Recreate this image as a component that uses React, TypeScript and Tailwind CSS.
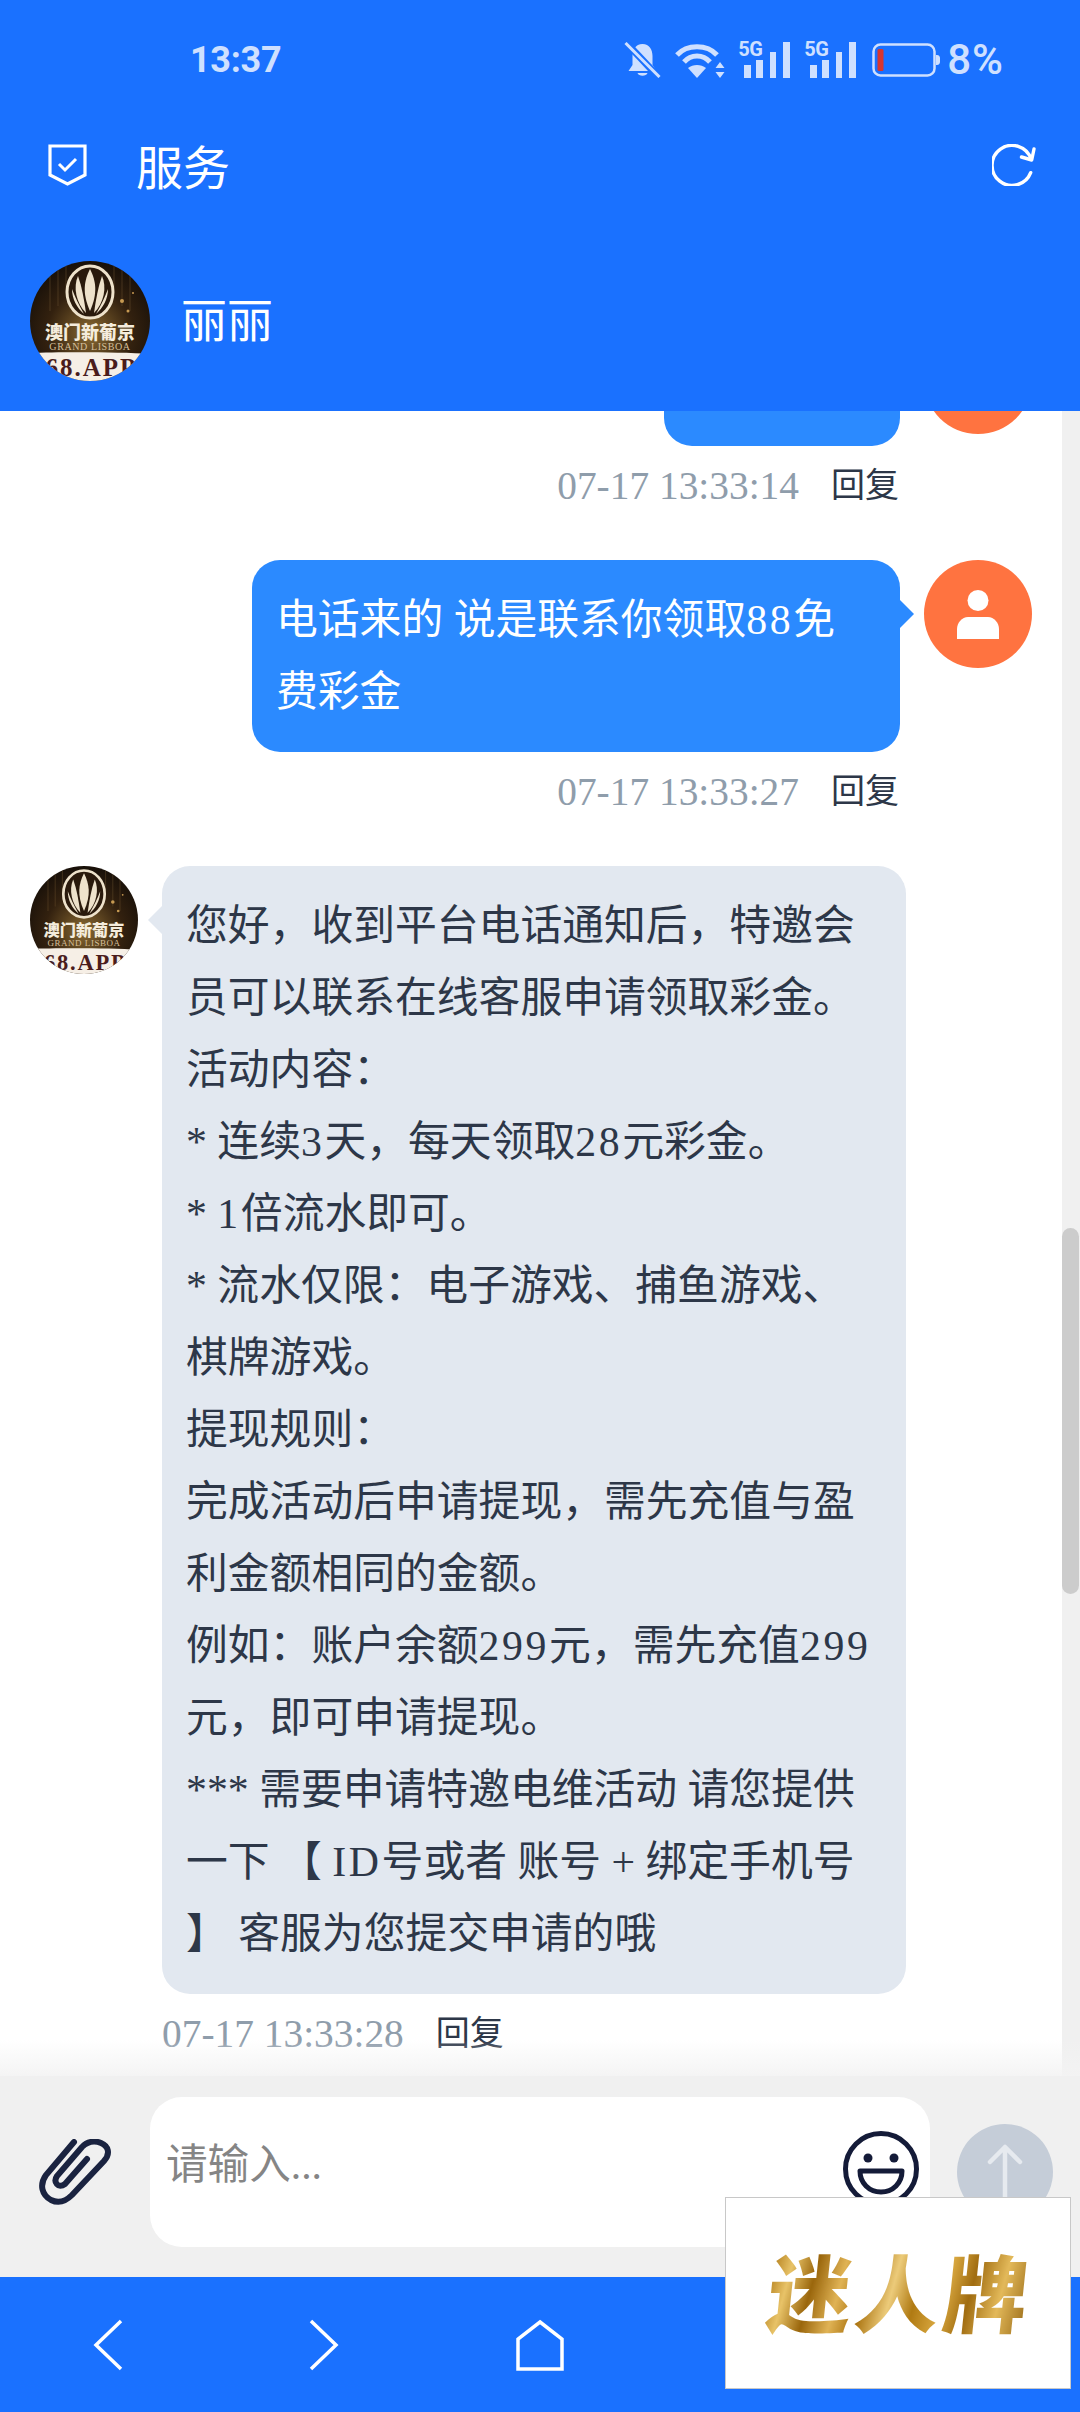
import React from "react";

const cjk = "font-['Liberation_Serif','Noto_Sans_CJK_SC',serif]";

function Lisboa({ size }: { size: number }) {
  const id = `clip${size}`;
  return (
    <svg width={size} height={size} viewBox="0 0 120 120" className="shrink-0">
      <defs>
        <clipPath id={id}>
          <circle cx="60" cy="60" r="60" />
        </clipPath>
        <radialGradient id={`g${size}`} cx="0.5" cy="0.6" r="0.65">
          <stop offset="0" stopColor="#8a6a32" />
          <stop offset="0.55" stopColor="#33210f" />
          <stop offset="1" stopColor="#120c07" />
        </radialGradient>
      </defs>
      <g clipPath={`url(#${id})`}>
        <rect width="120" height="120" fill={`url(#g${size})`} />
        <g stroke="#6b5330" strokeWidth="1" opacity="0.5">
          <path d="M20 0V50M28 0V45M36 0V30M84 0V30M92 0V45M100 0V50" />
        </g>
        <circle cx="92" cy="40" r="2" fill="#c79a52" />
        <circle cx="98" cy="50" r="1.5" fill="#c79a52" />
        <circle cx="103" cy="32" r="1" fill="#c79a52" />
        <ellipse cx="60" cy="31" rx="23" ry="26" fill="#2a1a0c" stroke="#eee2cb" strokeWidth="3" />
        <path d="M60 8C66 20 68 32 60 50C52 32 54 20 60 8Z" fill="#eee2cb" />
        <path d="M48 15C43 26 46 42 56 52C54 38 52 26 48 15Z" fill="#eee2cb" />
        <path d="M72 15C77 26 74 42 64 52C66 38 68 26 72 15Z" fill="#eee2cb" />
        <path d="M42 28C42 38 47 47 54 53C49 44 45 36 42 28Z" fill="#eee2cb" />
        <path d="M78 28C78 38 73 47 66 53C71 44 75 36 78 28Z" fill="#eee2cb" />
        <text x="60" y="77.5" textAnchor="middle" fontSize="18" fontWeight="800" fill="#f4ecdc" fontFamily="'Noto Sans CJK SC',sans-serif">澳门新葡京</text>
        <text x="60" y="89" textAnchor="middle" fontSize="10" letterSpacing="0.6" fill="#d5bf9a" fontFamily="'Liberation Serif',serif">GRAND LISBOA</text>
        <path d="M0 92C30 91 90 91 120 93V120H0Z" fill="#f6efe6" />
        <text x="1" y="115" fontSize="25" fontWeight="700" letterSpacing="2" fill="#4a1c1c" fontFamily="'Liberation Serif',serif">168.APP</text>
      </g>
    </svg>
  );
}

function UserAvatar() {
  return (
    <div className="w-[108px] h-[108px] rounded-full bg-[#ff7340] flex items-center justify-center shrink-0">
      <svg width="42" height="49" viewBox="0 0 42 49" fill="#ffffff">
        <ellipse cx="21" cy="10.5" rx="10.5" ry="10.5" />
        <path d="M0 49V39C0 33 5 27 11 27H31C37 27 42 33 42 39V49Z" />
      </svg>
    </div>
  );
}

function Rich({ text }: { text: string }) {
  const parts = text.split(/([0-9A-Za-z]+)/);
  return (
    <>
      {parts.map((p, i) =>
        /^[0-9A-Za-z]+$/.test(p) ? (
          <span key={i} className="tracking-[2.6px]">{p}</span>
        ) : (
          <span key={i}>{p}</span>
        )
      )}
    </>
  );
}

function Meta({ time, right }: { time: string; right?: boolean }) {
  return (
    <div className={`flex items-center h-[48px] mt-[16px] mb-[50px] gap-[32px] ${right ? "justify-end mr-[163px]" : "ml-[162px]"}`}>
      <span className={`${cjk} text-[39.4px] leading-[48px] text-[#8f9dab] whitespace-nowrap`}>{time}</span>
      <span className={`${cjk} text-[34px] leading-[48px] text-[#2d3748]`}>回复</span>
    </div>
  );
}

function UserRow({ lines, clipped }: { lines: string[]; clipped?: boolean }) {
  return (
    <div className={`flex justify-end items-start gap-[24px] pr-[30px] ${clipped ? "-mt-[85px]" : ""}`}>
      <div className={`relative bg-[#2b8aff] rounded-[28px] py-[24px] pl-[24px] pr-[27px] ${clipped ? "w-[236px] h-[120px]" : "w-[648px]"}`}>
        {lines.map((l) => (
          <div key={l} className={`${cjk} text-[41.8px] leading-[72px] text-white whitespace-nowrap`}><Rich text={l} /></div>
        ))}
        <div className="absolute right-[-14px] top-[40px] w-0 h-0 border-y-[14px] border-y-transparent border-l-[14px] border-l-[#2b8aff]" />
      </div>
      <UserAvatar />
    </div>
  );
}

const agent = [
  "您好，收到平台电话通知后，特邀会",
  "员可以联系在线客服申请领取彩金。",
  "活动内容：",
  "* 连续3天，每天领取28元彩金。",
  "* 1倍流水即可。",
  "* 流水仅限：电子游戏、捕鱼游戏、",
  "棋牌游戏。",
  "提现规则：",
  "完成活动后申请提现，需先充值与盈",
  "利金额相同的金额。",
  "例如：账户余额299元，需先充值299",
  "元，即可申请提现。",
  "*** 需要申请特邀电维活动 请您提供",
  "一下 【 ID号或者 账号 + 绑定手机号",
  "】 客服为您提交申请的哦",
];

export default function App() {
  return (
    <div className="relative w-[1080px] h-[2412px] flex flex-col overflow-hidden bg-white">
      <header className="h-[411px] shrink-0 bg-[#1a71ff] flex flex-col">
        <div className="h-[36px] mt-[42px] flex items-center pl-[190px] pr-[76px] text-[#cfe0ff] font-['Roboto',sans-serif] font-bold">
          <span className="text-[36px] leading-[36px] tracking-[-0.3px]">13:37</span>
          <div className="ml-auto flex items-center">
            <svg width="37" height="36" viewBox="0 0 36 36" fill="#cfe0ff">
              <path d="M18 2C11 2 8 8 8 14V23L4 29H32L28 23V14C28 8 25 2 18 2Z" />
              <path d="M13 31H23C22 34.5 14 34.5 13 31Z" />
              <path d="M2 1L34 35" stroke="#1a71ff" strokeWidth="7" />
              <path d="M1 1L35 35" stroke="#cfe0ff" strokeWidth="3" />
            </svg>
            <svg width="52" height="36" viewBox="0 0 52 36" className="ml-[13px]" fill="none" stroke="#cfe0ff" strokeWidth="5">
              <path d="M3 13C13 2 33 2 43 13" />
              <path d="M10 20C17 12 29 12 36 20" />
              <path d="M23 36L14 26C19 22 27 22 32 26Z" fill="#cfe0ff" stroke="none" />
              <path d="M46 20L50.5 26H41.5ZM46 36L41.5 30H50.5Z" fill="#cfe0ff" stroke="none" />
            </svg>
            <div className="relative w-[52px] h-[36px] ml-[12px]">
              <span className="absolute left-0 top-[-3px] text-[20px] leading-[20px] font-bold tracking-[-0.5px]">5G</span>
              <div className="absolute left-[6px] bottom-0 w-[7px] h-[13px] bg-[#cfe0ff]" />
              <div className="absolute left-[18px] bottom-0 w-[7px] h-[18px] bg-[#cfe0ff]" />
              <div className="absolute left-[32px] bottom-0 w-[6px] h-[26px] bg-[#cfe0ff]" />
              <div className="absolute left-[45px] bottom-0 w-[7px] h-[36px] bg-[#cfe0ff]" />
            </div>
            <div className="relative w-[52px] h-[36px] ml-[14px]">
              <span className="absolute left-0 top-[-3px] text-[20px] leading-[20px] font-bold tracking-[-0.5px]">5G</span>
              <div className="absolute left-[6px] bottom-0 w-[7px] h-[13px] bg-[#cfe0ff]" />
              <div className="absolute left-[18px] bottom-0 w-[7px] h-[18px] bg-[#cfe0ff]" />
              <div className="absolute left-[32px] bottom-0 w-[6px] h-[26px] bg-[#cfe0ff]" />
              <div className="absolute left-[45px] bottom-0 w-[7px] h-[36px] bg-[#cfe0ff]" />
            </div>
            <svg width="68" height="36" viewBox="0 0 68 36" className="ml-[16px]">
              <rect x="1.5" y="2.5" width="61" height="31" rx="7" fill="none" stroke="#cfe0ff" strokeWidth="2.5" />
              <rect x="5.5" y="7" width="6" height="22" rx="1.5" fill="#d8352e" />
              <path d="M64 13H65C67 13 68 14.5 68 16V20C68 21.5 67 23 65 23H64Z" fill="#cfe0ff" />
            </svg>
            <span className="ml-[7px] text-[42px] leading-[36px] tracking-[1px] font-medium">8%</span>
          </div>
        </div>
        <div className="h-[84px] mt-[45px] flex items-center pl-[48px] pr-[44px] text-white">
          <svg width="39" height="42" viewBox="0 0 39 42" fill="none" stroke="#ffffff" strokeWidth="3.2" className="shrink-0">
            <path d="M2 2H37V31L19.5 40L2 31Z" />
            <path d="M11 20L17 26L28 15" strokeWidth="3" />
          </svg>
          <span className="ml-[49px] text-[47px] leading-[60px] font-['Noto_Sans_CJK_SC',sans-serif]">服务</span>
          <svg width="44" height="42" viewBox="0 0 44 42" fill="none" stroke="#ffffff" strokeWidth="3.4" strokeLinecap="round" strokeLinejoin="round" className="ml-auto">
            <path d="M38.7 28.7A20 20 0 1 1 39 15" />
            <path d="M42 5L39.7 16L29.5 13" />
          </svg>
        </div>
        <div className="h-[120px] mt-[54px] flex items-center pl-[30px]">
          <Lisboa size={120} />
          <span className="ml-[31px] -mt-[8px] text-[46px] leading-[60px] text-white font-['Noto_Sans_CJK_SC',sans-serif]">丽丽</span>
        </div>
      </header>

      <main className="relative flex-1 flex min-h-0 bg-white">
        <div className="flex-1 min-w-0 overflow-hidden">
          <UserRow lines={[]} clipped />
          <Meta time="07-17 13:33:14" right />
          <UserRow lines={["电话来的 说是联系你领取88免", "费彩金"]} />
          <Meta time="07-17 13:33:27" right />
          <div className="flex items-start gap-[24px] pl-[30px]">
            <Lisboa size={108} />
            <div className="relative w-[744px] bg-[#e2e8f0] rounded-[28px] py-[24px] pl-[24px] pr-[27px] shrink-0">
              <div className="absolute left-[-14px] top-[40px] w-0 h-0 border-y-[14px] border-y-transparent border-r-[14px] border-r-[#e2e8f0]" />
              {agent.map((l) => (
                <div key={l} className={`${cjk} text-[41.8px] leading-[72px] text-[#2d3748] whitespace-nowrap`}><Rich text={l} /></div>
              ))}
            </div>
          </div>
          <Meta time="07-17 13:33:28" />
        </div>
        <div className="w-[18px] shrink-0 bg-[#f0f0f0]">
          <div className="mt-[817px] h-[366px] w-[17px] rounded-full bg-[#cccccc]" />
        </div>
        <div className="absolute left-0 right-0 bottom-0 h-[36px] bg-gradient-to-b from-white/0 to-[#f3f3f3]/90" />
      </main>

      <div className="h-[201px] shrink-0 bg-[#f0f0f0] flex items-start pt-[21px]">
        <div className="w-[150px] h-[150px] flex items-center justify-center shrink-0">
          <svg width="74" height="66" viewBox="0 0 74 66" fill="none" stroke="#1a2340" strokeWidth="6" strokeLinecap="round">
            <path d="M36 3L8 36C1 46 4 56 13 61C21 65 28 62 34 56L66 22C73 14 70 7 63 4C56 1 49 3 44 8L19 37C15 43 20 50 27 45L49 20" />
          </svg>
        </div>
        <div className="w-[780px] h-[150px] bg-white rounded-[32px] flex items-start pl-[11px] pr-[11px] shrink-0">
          <input
            placeholder="请输入..."
            readOnly
            className={`flex-1 min-w-0 mt-[43px] h-[50px] pl-[5px] bg-transparent outline-none ${cjk} text-[41.6px] leading-[50px] placeholder:text-[#858585]`}
          />
          <svg width="76" height="76" viewBox="0 0 76 76" fill="none" className="mt-[34px] shrink-0">
            <circle cx="38" cy="38" r="35.5" stroke="#141b38" strokeWidth="5" />
            <circle cx="25" cy="27" r="4.5" fill="#141b38" />
            <circle cx="51" cy="27" r="4.5" fill="#141b38" />
            <path d="M17 40H59C59 52 50 61 38 61C26 61 17 52 17 40Z" stroke="#141b38" strokeWidth="5" strokeLinejoin="round" />
          </svg>
        </div>
        <div className="ml-[27px] mt-[27px] w-[96px] h-[96px] rounded-full bg-[#c5cdd8] flex items-center justify-center shrink-0">
          <svg width="36" height="56" viewBox="0 0 36 56" fill="none" stroke="#e6eaef" strokeWidth="4.5" strokeLinecap="round" strokeLinejoin="round">
            <path d="M18 54V3M3 18L18 3L33 18" />
          </svg>
        </div>
      </div>

      <nav className="h-[135px] shrink-0 bg-[#1a71ff] grid grid-cols-5">
        <div className="flex items-center justify-center">
          <svg width="30" height="52" viewBox="0 0 30 52" fill="none" stroke="#ffffff" strokeWidth="3.5">
            <path d="M28 2L3 26L28 50" />
          </svg>
        </div>
        <div className="flex items-center justify-center">
          <svg width="30" height="52" viewBox="0 0 30 52" fill="none" stroke="#ffffff" strokeWidth="3.5">
            <path d="M2 2L27 26L2 50" />
          </svg>
        </div>
        <div className="flex items-center justify-center">
          <svg width="48" height="52" viewBox="0 0 48 52" fill="none" stroke="#ffffff" strokeWidth="3.5">
            <path d="M24 3L46 20V50H2V20Z" />
          </svg>
        </div>
      </nav>

      <div className="absolute left-[725px] top-[2197px] w-[346px] h-[192px] bg-white border border-[#c8c8c8] flex items-center justify-center">
        <span className="pb-[6px] ml-[5px] -skew-x-6 text-[84px] leading-[96px] font-black tracking-[4px] font-['Noto_Sans_CJK_SC',sans-serif] bg-clip-text text-transparent bg-[linear-gradient(100deg,#a8700c_0%,#e8c368_9%,#9a660c_18%,#e0b355_28%,#a8700c_37%,#eccb7a_47%,#b07a12_56%,#d9a840_66%,#a06c10_75%,#e3b95a_86%,#8f600e_100%)]">迷人牌</span>
      </div>
    </div>
  );
}
